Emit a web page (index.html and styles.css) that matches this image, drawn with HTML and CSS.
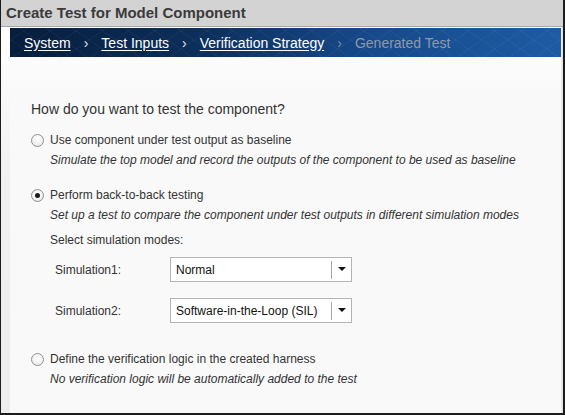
FILE: index.html
```html
<!DOCTYPE html>
<html>
<head>
<meta charset="utf-8">
<link rel="stylesheet" href="styles.css">
</head>
<body>
<div class="window">
  <div class="titlebar">Create Test for Model Component</div>
  <div class="body">
    <div class="gutter"></div>
    <div class="main">
      <nav class="crumbs">
        <a class="crumb">System</a>
        <span class="sep">›</span>
        <a class="crumb">Test Inputs</a>
        <span class="sep">›</span>
        <a class="crumb">Verification Strategy</a>
        <span class="sep dim">›</span>
        <span class="crumb current">Generated Test</span>
      </nav>
      <div class="content">
        <div class="question">How do you want to test the component?</div>

        <div class="option">
          <div class="opt-row"><span class="radio"></span><span class="label">Use component under test output as baseline</span></div>
          <div class="desc">Simulate the top model and record the outputs of the component to be used as baseline</div>
        </div>

        <div class="option opt2">
          <div class="opt-row"><span class="radio checked"></span><span class="label">Perform back-to-back testing</span></div>
          <div class="desc">Set up a test to compare the component under test outputs in different simulation modes</div>
          <div class="sub">Select simulation modes:</div>
          <div class="field">
            <span class="field-label">Simulation1:</span>
            <div class="select"><span class="value">Normal</span><span class="arrow"></span></div>
          </div>
          <div class="field">
            <span class="field-label">Simulation2:</span>
            <div class="select"><span class="value">Software-in-the-Loop (SIL)</span><span class="arrow"></span></div>
          </div>
        </div>

        <div class="option opt3">
          <div class="opt-row"><span class="radio"></span><span class="label">Define the verification logic in the created harness</span></div>
          <div class="desc">No verification logic will be automatically added to the test</div>
        </div>
      </div>
    </div>
    <div class="rgutter"></div>
  </div>
</div>
</body>
</html>
```

FILE: styles.css
```css
* { box-sizing: border-box; }
html, body { margin: 0; padding: 0; background: #f9f9f9; }
body { font-family: "Liberation Sans", Arial, sans-serif; }

.window {
  width: 565px;
  height: 415px;
  border-left: 1px solid #1c1c1c;
  border-right: 2px solid #1c1c1c;
  border-bottom: 2px solid #1c1c1c;
  display: flex;
  flex-direction: column;
  background: #f9f9f9;
}

.titlebar {
  height: 27px;
  background: #d3d3d3;
  border-bottom: 1px solid #a6a6a6;
  padding-left: 5px;
  font-size: 15px;
  font-weight: bold;
  line-height: 26px;
  color: #3b3b3b;
}

.body {
  flex: 1;
  display: flex;
  background: #f9f9f9;
}

.gutter {
  width: 9px;
  background: linear-gradient(180deg, #ffffff 0%, #f0f0f0 40%, #ededed 100%);
}
.rgutter {
  width: 2px;
  background: linear-gradient(90deg, #f2f2f2, #dcdcdc);
}

.main {
  flex: 1;
  display: flex;
  flex-direction: column;
  background: linear-gradient(180deg, #ffffff 0px, #f9f9f9 60px);
}

.crumbs {
  margin-top: 1px;
  height: 29px;
  display: flex;
  align-items: center;
  padding-left: 14px;
  font-size: 14px;
  color: #ffffff;
  background:
    repeating-linear-gradient(35deg, rgba(255,255,255,0) 0 14px, rgba(255,255,255,0.04) 14px 15px),
    repeating-linear-gradient(-35deg, rgba(255,255,255,0) 0 14px, rgba(255,255,255,0.04) 14px 15px),
    linear-gradient(90deg, #071d3c 0%, #0c2f5c 35%, #16498a 65%, #1d5ba3 100%);
}
.crumb {
  color: #ffffff;
  text-decoration: underline;
  text-underline-offset: 2px;
}
.crumb.current {
  color: #8e9aa8;
  text-decoration: none;
}
.sep {
  margin: 0 13px;
  font-size: 14px;
  color: #e6e6e6;
}
.sep.dim { color: #7d8ea3; }

.content {
  padding-left: 21px;
  padding-top: 43px;
  color: #333333;
}

.question {
  font-size: 14px;
  line-height: 18px;
  color: #333;
}

.option { margin-top: 13px; }
.opt2 { margin-top: 18px; }
.opt3 { margin-top: 27px; }

.opt-row {
  display: flex;
  align-items: center;
  height: 18px;
}
.radio {
  width: 13px;
  height: 13px;
  border-radius: 50%;
  border: 1px solid #8f8f8f;
  background: radial-gradient(circle at 50% 35%, #ffffff 0%, #f1f1f1 60%, #e2e2e2 100%);
  margin-right: 6px;
  position: relative;
  flex: none;
}
.radio.checked::after {
  content: "";
  position: absolute;
  left: 3px;
  top: 3px;
  width: 5px;
  height: 5px;
  border-radius: 50%;
  background: #1a1a1a;
}
.label {
  font-size: 12px;
  color: #333;
}
.desc {
  margin-top: 3px;
  padding-left: 19px;
  font-size: 12px;
  font-style: italic;
  line-height: 16px;
  color: #333;
}
.sub {
  margin-top: 9px;
  padding-left: 19px;
  font-size: 12px;
  line-height: 16px;
  color: #333;
}
.field {
  display: flex;
  align-items: center;
  margin-top: 9px;
  padding-left: 24px;
}
.field + .field { margin-top: 16px; }
.field-label {
  width: 115px;
  font-size: 12px;
  color: #333;
}
.select {
  width: 182px;
  height: 25px;
  background: #ffffff;
  border: 1px solid #b4b4b4;
  display: flex;
  align-items: center;
}
.value {
  flex: 1;
  padding-left: 5px;
  font-size: 12px;
  color: #111;
}
.arrow {
  width: 20px;
  height: 18px;
  border-left: 1px solid #a8a8a8;
  display: flex;
  align-items: center;
  justify-content: center;
}
.arrow::before {
  content: "";
  width: 0;
  height: 0;
  border-left: 4px solid transparent;
  border-right: 4px solid transparent;
  border-top: 4px solid #111;
  margin-top: -2px;
}
```
